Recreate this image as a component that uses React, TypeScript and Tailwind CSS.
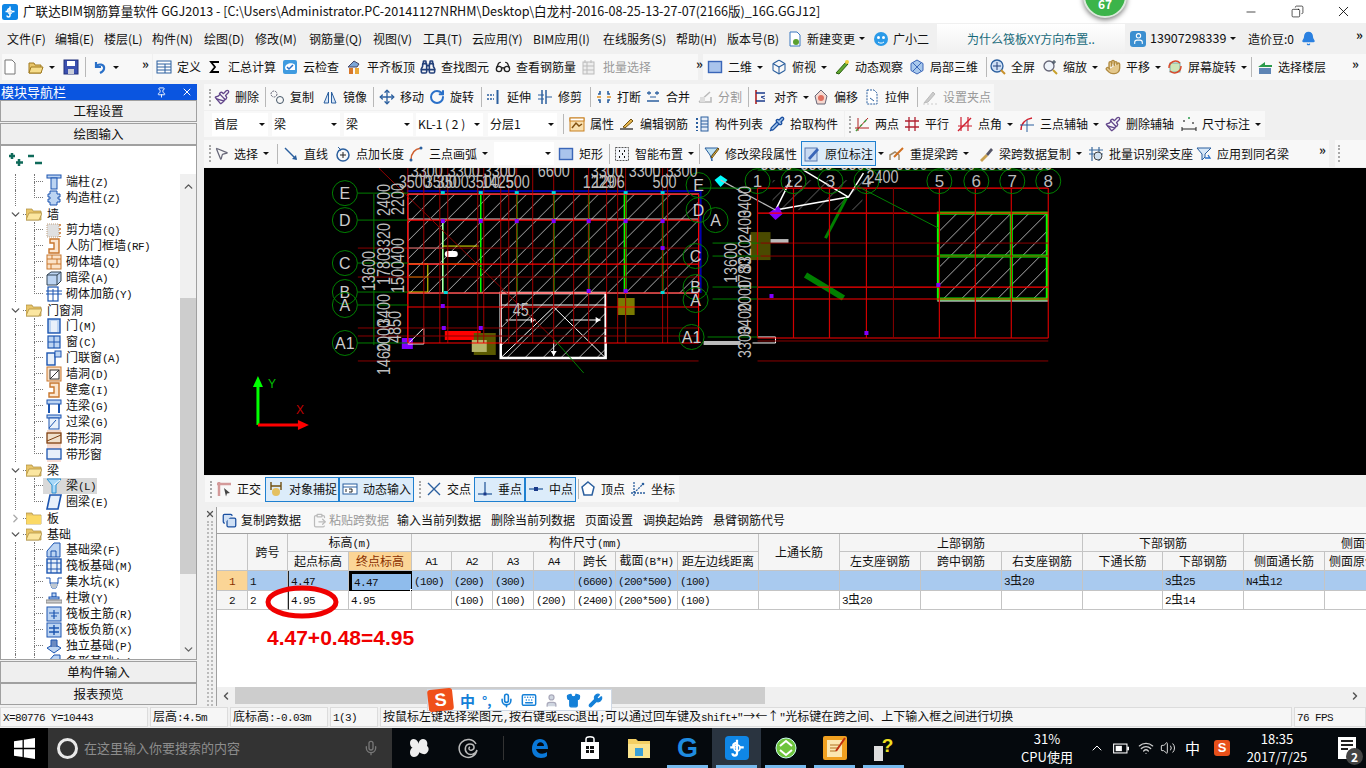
import type { ReactNode } from 'react';
import {
  Binoculars, Glasses, Hand, Paintbrush, Move, RotateCw, Box, Pipette, MousePointer2,
  Copy, ClipboardPaste, Mic, Keyboard, Shirt, Wrench, Volume2, Wifi, ChevronUp,
  ChevronDown, ChevronRight, ChevronLeft, Bell, User, X as XIcon, Minus, Pin,
} from 'lucide-react';

type Tool = { w: string; i?: string; l?: string; a?: boolean; d?: boolean; sel?: boolean };

const s = (children: ReactNode) => (
  <svg viewBox="0 0 16 16" width="16" height="16" fill="none" className="shrink-0">{children}</svg>
);

const icons: Record<string, ReactNode> = {
  doc: s(<path d="M3 1h7l3 3v11H3z" fill="#fff" stroke="#777" />),
  open: s(<><path d="M1 4h5l1 2h6v8H1z" fill="#e8c56a" stroke="#a07a20" /><path d="M3 8h12l-2 6H1z" fill="#f6dd8c" stroke="#a07a20" /></>),
  save: s(<><rect x="1" y="1" width="14" height="14" fill="#3b50b0" stroke="#22307a" /><rect x="4" y="2" width="8" height="5" fill="#fff" /><rect x="5" y="10" width="6" height="5" fill="#c9cdd8" /></>),
  undo: s(<path d="M4 3v5h5M4 8c2-4 9-3 8 2-.4 2-2 3-4 4" stroke="#2a70c8" strokeWidth="2.2" />),
  define: s(<><rect x="1" y="2" width="14" height="12" fill="#fff" stroke="#2b5f9e" /><path d="M1 5h14M1 8h14M1 11h14M9 5v9" stroke="#2b5f9e" /></>),
  sigma: s(<path d="M12 3H4l4 5-4 5h8" stroke="#000" strokeWidth="1.8" />),
  cloud: s(<><rect x="1" y="1" width="14" height="14" rx="2" fill="#3f9be0" /><path d="M3 9c0-5 8-6 10-3v5H4z" fill="#fff" /><path d="M5 8l2 2 4-4" stroke="#2a70c8" strokeWidth="1.5" /></>),
  level: s(<><path d="M2 8l6-6 5 3-2 3z" fill="#7ba6d8" stroke="#446" /><rect x="3" y="9" width="4" height="6" fill="#d8782a" /><rect x="9" y="9" width="4" height="6" fill="#e8a83a" /></>),
  find: <Binoculars size={16} color="#23407a" strokeWidth={2.4} />,
  glasses: <Glasses size={16} color="#222" strokeWidth={2} />,
  batch: s(<><rect x="1" y="3" width="11" height="12" fill="#eee" stroke="#bbb" /><path d="M1 7h11M1 11h11M5 3v12M3 1v3M9 1v3" stroke="#bbb" /></>),
  rect2d: s(<rect x="1.5" y="2.5" width="13" height="11" fill="#a9c4ec" stroke="#3a66b8" strokeWidth="1.4" />),
  cube: <Box size={16} color="#2b5f9e" strokeWidth={1.6} />,
  orbit: s(<><path d="M2 14L12 3l2 2L5 15z" fill="#62a830" stroke="#2a6010" /><circle cx="13" cy="3" r="2" fill="#f0d040" /></>),
  local3d: s(<><path d="M8 1l6 3.5v7L8 15l-6-3.5v-7z" fill="#a8c8ec" stroke="#3a66b8" /><path d="M4 4l8 8M12 4l-8 8" stroke="#3a66b8" /></>),
  full: s(<><circle cx="7" cy="7" r="6" fill="#cfe0f5" stroke="#2b5f9e" strokeWidth="1.3" /><path d="M7 3v8M3 7h8" stroke="#23407a" /><path d="M11 11l4 4" stroke="#c8902a" strokeWidth="2" /></>),
  zoom: s(<><circle cx="7" cy="7" r="5" fill="#eef3fa" stroke="#667" strokeWidth="1.3" /><path d="M11 11l4 4" stroke="#c8a02a" strokeWidth="2" /><path d="M12 1v4M10 3h4" stroke="#345" /></>),
  pan: <Hand size={16} color="#b08a40" fill="#e4c88c" />,
  spin: s(<><rect x="3" y="4" width="10" height="9" fill="#cfe6b8" stroke="#7aa" /><path d="M2 9a6.5 6.5 0 0 1 11-5M14 7a6.5 6.5 0 0 1-11 5" stroke="#d84a2a" strokeWidth="1.5" /></>),
  floors: s(<><path d="M1 8l7-5v3h7v2z" fill="#2a9a4a" /><path d="M2 10h12M2 12h12M2 14h12" stroke="#2b5f9e" strokeWidth="1.4" /></>),
  brush: <Paintbrush size={16} color="#64488c" />,
  copy: s(<><circle cx="5" cy="5" r="3" stroke="#667" strokeDasharray="2 1" /><circle cx="11" cy="11" r="3.5" stroke="#456" /></>),
  mirror: s(<><path d="M2 14L6.5 3v11zM14 14L9.5 3v11z" fill="#d8e6f8" stroke="#2b5f9e" /></>),
  move: <Move size={16} color="#2b5f9e" strokeWidth={2} />,
  rotate: <RotateCw size={16} color="#2a70c8" strokeWidth={3} />,
  extend: s(<><path d="M11.5 1v14" stroke="#2b5f9e" strokeWidth="2" /><path d="M1 6h7M1 10h7" stroke="#2b5f9e" strokeDasharray="2 1" strokeWidth="1.4" /></>),
  trim: s(<><path d="M5 1v14M9 1v14" stroke="#2b5f9e" strokeWidth="1.5" /><path d="M1 6h6M1 10h6M9 8h6" stroke="#2b5f9e" /></>),
  cut: s(<><path d="M4 2v3H2M12 2v3h2M4 14v-3H2M12 14v-3h2" stroke="#2b5f9e" strokeWidth="1.6" /><path d="M1 8h4M11 8h4" stroke="#e09020" strokeWidth="1.6" /></>),
  merge: s(<><path d="M2 4h4M10 4h4M2 12h12" stroke="#2b5f9e" strokeWidth="1.6" /><path d="M4 2v4M12 2v4M5 8h6" stroke="#2b5f9e" /></>),
  split: s(<><path d="M2 13L13 3M2 13h12V8" stroke="#bbb" strokeWidth="1.6" /><rect x="3" y="8" width="5" height="5" fill="#ddd" /></>),
  align: s(<><path d="M3 1v14" stroke="#b02020" strokeWidth="1.6" /><path d="M3 4h9M3 12h9" stroke="#1a3a8a" strokeWidth="1.6" /><path d="M12 7l-4 1 4 2" stroke="#1a3a8a" /></>),
  offset: s(<><path d="M8 1l6 6-2 8H4L2 7z" fill="#f5d8d0" stroke="#667" /><circle cx="8" cy="9" r="3" fill="#e07060" /></>),
  stretch: s(<><path d="M3 1h7l3 3v11H3z" fill="#fff" stroke="#2b5f9e" strokeDasharray="2 1" /><path d="M6 9l4 3" stroke="#2b5f9e" /></>),
  grip2: s(<><path d="M2 14L11 3l2 2-7 8z" fill="#ccc" stroke="#bbb" /><path d="M1 15h14" stroke="#ccc" strokeDasharray="2 2" /></>),
  attr: s(<><rect x="1" y="2" width="14" height="13" fill="#f8e0b0" stroke="#c88020" /><rect x="1" y="2" width="14" height="3" fill="#fff" stroke="#c88020" /><path d="M3 12l4-5 3 3 3-2" stroke="#805010" strokeWidth="1.5" /></>),
  edit: s(<><path d="M1 13h13" stroke="#444" strokeWidth="1.5" /><path d="M4 11L12 3l2 2-8 7z" fill="#e8b850" stroke="#705010" /></>),
  list: s(<><path d="M3 2v2M3 6v2M3 10v2M3 14v1" stroke="#2b5f9e" strokeWidth="2" /><rect x="7" y="1" width="7" height="14" fill="#e4ecf8" stroke="#2b5f9e" /><path d="M7 5h7M7 8h7M7 11h7" stroke="#2b5f9e" /></>),
  pick: <Pipette size={16} color="#1a4fa0" fill="#a8c8ec" />,
  two: s(<><path d="M1 12h14M4 2v13M2 15L14 2" stroke="#b02020" strokeWidth="1" /><path d="M2 15L14 2" stroke="#40a040" strokeDasharray="3 3" strokeWidth="1.4" /></>),
  parallel: s(<path d="M1 5h14M1 11h14M5 1v14M11 1v14" stroke="#b02030" strokeWidth="1.3" />),
  angle: s(<><path d="M1 10h14M4 1v14M11 1v14" stroke="#d02030" strokeWidth="1.2" /><path d="M1 15L14 2" stroke="#d02030" strokeWidth="1.4" /></>),
  arcaxis: s(<><path d="M2 14C2 7 7 3 13 2" stroke="#d02030" strokeWidth="1.5" /><path d="M1 9h14M8 4v12" stroke="#2b5f9e" /></>),
  dim: s(<><path d="M1 11v4M15 11v4M1 13h14" stroke="#222" /><circle cx="3" cy="5" r="1" fill="#555" /><circle cx="8" cy="2" r="1" fill="#2a9a4a" /><circle cx="12" cy="7" r="1" fill="#555" /></>),
  select: <MousePointer2 size={15} color="#667" />,
  line: s(<><path d="M2 2l11 11" stroke="#2b5f9e" strokeWidth="1.4" /><path d="M14 14l-5-1 4-4z" fill="#2b5f9e" /></>),
  addlen: s(<><circle cx="8" cy="9" r="6" stroke="#2b5f9e" strokeWidth="1.5" /><path d="M8 6v6M5 9h6" stroke="#222" /><path d="M3 1l3 3-3 1" stroke="#2b5f9e" /></>),
  arc: s(<><path d="M3 14C3 7 7 3 13 2" stroke="#d06030" strokeWidth="1.5" /><circle cx="3" cy="14" r="1.5" fill="#2b5f9e" /><circle cx="13" cy="2" r="1.5" fill="#2b5f9e" /></>),
  smart: s(<><rect x="1.5" y="1.5" width="13" height="13" fill="#f4f6fa" stroke="#555" strokeDasharray="2 1" /><path d="M5 5h1M10 5h1M8 8h1M5 11h1M10 11h1" stroke="#111" strokeWidth="2" /></>),
  seg: s(<><path d="M1 2h13L8 9v6L6 9z" fill="#bfe0f0" stroke="#2b5f9e" /><path d="M7 11l7-9 1 1-7 9z" fill="#e8c050" stroke="#705010" /></>),
  note: s(<><rect x="1" y="2" width="12" height="13" fill="#c8daf2" stroke="#5a7ab0" /><path d="M4 12L13 2l2 2-9 10z" fill="#3a66b8" /></>),
  lift: s(<><path d="M1 14V9l5-3 4 3v5" stroke="#a08a6a" strokeWidth="1.5" /><path d="M5 11L14 2" stroke="#d07020" strokeWidth="2" /></>),
  span: s(<><path d="M2 14l6-6 2 2-6 6z" fill="#c8a050" /><path d="M8 8l5-6 2 2-5 6z" fill="#556" /></>),
  scan: s(<><path d="M1 4h14M1 8h14M4 1v14M11 1v14" stroke="#3a6a9e" strokeWidth="1.2" /><circle cx="10" cy="10" r="4" fill="#cfe0f0" stroke="#444" /></>),
  same: s(<><path d="M1 2h14L9 8v3l-3 3V8z" fill="#d8e8f8" stroke="#2b5f9e" /><path d="M9 12h5l-2-3" stroke="#2a70c8" strokeWidth="1.3" /></>),
  ortho: s(<><path d="M3 1v14M1 3h14" stroke="#d49a9a" strokeWidth="2.5" /><path d="M8 7l6 5-3 .5-1 3z" fill="#444" /></>),
  snap: s(<><path d="M3 1v8M13 1v8M3 5h10" stroke="#705010" strokeWidth="1.4" /><circle cx="8" cy="11" r="4" fill="#e4c060" /></>),
  input: s(<><rect x="1" y="3" width="14" height="10" fill="#fff" stroke="#2b5f9e" /><path d="M1 6h14" stroke="#2b5f9e" /><path d="M4 8v3M7 8l3 0v3H7" stroke="#222" /></>),
  cross: s(<path d="M2 2l12 12M14 2L2 14" stroke="#2b5f9e" strokeWidth="1.4" />),
  perp: s(<><path d="M1 13h14" stroke="#2b5f9e" strokeWidth="1.3" /><path d="M8 1v12" stroke="#2b5f9e" strokeWidth="1.3" /><rect x="6.5" y="11.5" width="3" height="3" fill="#1a3a8a" /></>),
  mid: s(<><path d="M1 8h14" stroke="#2b5f9e" strokeWidth="1.3" /><rect x="6" y="6" width="4" height="4" fill="#1a3a8a" /></>),
  vertex: s(<path d="M8 1l6 5-2 8H4L2 6z" fill="#fff" stroke="#2b5f9e" strokeWidth="1.5" />),
  coord: s(<><path d="M4 1v14M1 12h14M4 12L13 3" stroke="#2b5f9e" strokeDasharray="2 1" strokeWidth="1.3" /><circle cx="13" cy="3" r="1.3" fill="#2b5f9e" /></>),
  copysm: <Copy size={15} color="#1a4fa0" fill="#cfe0f5" />,
  pastesm: <ClipboardPaste size={15} color="#bbb" />,
};

const Arrow = () => (
  <span className="inline-block shrink-0 border-x-[3px] border-t-[3px] border-x-transparent border-t-[#111]" />
);
const Grip = ({ w }: { w: string }) => (
  <span className={`flex h-full shrink-0 items-center justify-center ${w}`}>
    <span className="h-[17px] border-l-2 border-dotted border-[#a8a8a8]" />
  </span>
);
const Sep = ({ w }: { w: string }) => (
  <span className={`flex h-full shrink-0 items-center justify-center ${w}`}>
    <span className="h-[20px] border-l border-[#b8b8b8]" />
  </span>
);
const More = ({ w }: { w: string }) => (
  <span className={`shrink-0 text-[13px] leading-none font-bold text-[#222] mb-[8px] text-right ${w}`}>»</span>
);

const ToolItem = ({ t }: { t: Tool }) => {
  if (!t.i && !t.l && !t.a) return <Sep w={t.w} />;
  return (
    <span
      className={`flex shrink-0 items-center gap-[5px] whitespace-nowrap ${t.w} ${t.d ? 'text-[#9a9a9a]' : 'text-[#111]'} ${
        t.sel ? 'h-[25px] border border-[#1f80d0] bg-[#dcecfa] pl-[2px]' : ''
      }`}
    >
      {t.i && icons[t.i]}
      {t.l && <span>{t.l}</span>}
      {t.a && <Arrow />}
    </span>
  );
};

const Combo = ({ w, t }: { w: string; t: string }) => (
  <span className={`flex h-[23px] shrink-0 items-center justify-between bg-white pl-[2px] pr-[3px] ${w}`}>
    <span className="whitespace-nowrap">{t}</span>
    <Arrow />
  </span>
);

const Tools = ({ items }: { items: Tool[] }) => (
  <>
    {items.map((t, i) => (
      <ToolItem key={i} t={t} />
    ))}
  </>
);

const row1a: Tool[] = [
  { w: 'w-[26px]', i: 'doc' }, { w: 'w-[35px]', i: 'open', a: true }, { w: 'w-[16px]', i: 'save' }, { w: 'w-[13px]' },
  { w: 'w-[38px]', i: 'undo', a: true },
];
const row1b: Tool[] = [
  { w: 'w-[51px]', i: 'define', l: '定义' }, { w: 'w-[75px]', i: 'sigma', l: '汇总计算' }, { w: 'w-[64px]', i: 'cloud', l: '云检查' },
  { w: 'w-[74px]', i: 'level', l: '平齐板顶' }, { w: 'w-[75px]', i: 'find', l: '查找图元' }, { w: 'w-[87px]', i: 'glasses', l: '查看钢筋量' },
  { w: 'w-[85px]', i: 'batch', l: '批量选择', d: true },
];
const row1c: Tool[] = [
  { w: 'w-[64px]', i: 'rect2d', l: '二维', a: true }, { w: 'w-[63px]', i: 'cube', l: '俯视', a: true }, { w: 'w-[75px]', i: 'orbit', l: '动态观察' },
  { w: 'w-[73px]', i: 'local3d', l: '局部三维' }, { w: 'w-[8px]' }, { w: 'w-[52px]', i: 'full', l: '全屏' }, { w: 'w-[63px]', i: 'zoom', l: '缩放', a: true },
  { w: 'w-[62px]', i: 'pan', l: '平移', a: true }, { w: 'w-[79px]', i: 'spin', l: '屏幕旋转', a: true }, { w: 'w-[11px]' },
  { w: 'w-[75px]', i: 'floors', l: '选择楼层' },
];
const row2: Tool[] = [
  { w: 'w-[47px]', i: 'brush', l: '删除' }, { w: 'w-[8px]' }, { w: 'w-[53px]', i: 'copy', l: '复制' }, { w: 'w-[46px]', i: 'mirror', l: '镜像' }, { w: 'w-[11px]' },
  { w: 'w-[50px]', i: 'move', l: '移动' }, { w: 'w-[48px]', i: 'rotate', l: '旋转' }, { w: 'w-[9px]' }, { w: 'w-[51px]', i: 'extend', l: '延伸' },
  { w: 'w-[48px]', i: 'trim', l: '修剪' }, { w: 'w-[11px]' }, { w: 'w-[49px]', i: 'cut', l: '打断' }, { w: 'w-[52px]', i: 'merge', l: '合并' },
  { w: 'w-[47px]', i: 'split', l: '分割', d: true }, { w: 'w-[9px]' }, { w: 'w-[60px]', i: 'align', l: '对齐', a: true }, { w: 'w-[51px]', i: 'offset', l: '偏移' },
  { w: 'w-[48px]', i: 'stretch', l: '拉伸' }, { w: 'w-[10px]' }, { w: 'w-[72px]', i: 'grip2', l: '设置夹点', d: true },
];
const row3a: Tool[] = [
  { w: 'w-[12px]' }, { w: 'w-[50px]', i: 'attr', l: '属性' }, { w: 'w-[75px]', i: 'edit', l: '编辑钢筋' }, { w: 'w-[75px]', i: 'list', l: '构件列表' }, { w: 'w-[75px]', i: 'pick', l: '拾取构件' },
];
const row3b: Tool[] = [
  { w: 'w-[50px]', i: 'two', l: '两点' }, { w: 'w-[53px]', i: 'parallel', l: '平行' }, { w: 'w-[62px]', i: 'angle', l: '点角', a: true },
  { w: 'w-[86px]', i: 'arcaxis', l: '三点辅轴', a: true }, { w: 'w-[76px]', i: 'brush', l: '删除辅轴' }, { w: 'w-[84px]', i: 'dim', l: '尺寸标注', a: true },
];
const row4a: Tool[] = [
  { w: 'w-[58px]', i: 'select', l: '选择', a: true }, { w: 'w-[11px]' }, { w: 'w-[52px]', i: 'line', l: '直线' }, { w: 'w-[73px]', i: 'addlen', l: '点加长度' },
  { w: 'w-[86px]', i: 'arc', l: '三点画弧', a: true },
];
const row4b: Tool[] = [
  { w: 'w-[46px]', i: 'rect2d', l: '矩形' }, { w: 'w-[10px]' }, { w: 'w-[80px]', i: 'smart', l: '智能布置', a: true }, { w: 'w-[10px]' },
  { w: 'w-[97px]', i: 'seg', l: '修改梁段属性' }, { w: 'w-[75px]', i: 'note', l: '原位标注', sel: true }, { w: 'w-[13px] pl-[2px]', a: true },
  { w: 'w-[89px]', i: 'lift', l: '重提梁跨', a: true }, { w: 'w-[110px]', i: 'span', l: '梁跨数据复制', a: true }, { w: 'w-[108px]', i: 'scan', l: '批量识别梁支座' },
  { w: 'w-[98px]', i: 'same', l: '应用到同名梁' },
];
const snapA: Tool[] = [
  { w: 'w-[49px]', i: 'ortho', l: '正交' }, { w: 'w-[74px]', i: 'snap', l: '对象捕捉', sel: true }, { w: 'w-[75px]', i: 'input', l: '动态输入', sel: true },
];
const snapB: Tool[] = [
  { w: 'w-[48px]', i: 'cross', l: '交点' }, { w: 'w-[51px]', i: 'perp', l: '垂点', sel: true }, { w: 'w-[51px]', i: 'mid', l: '中点', sel: true },
  { w: 'w-[4px]' }, { w: 'w-[50px]', i: 'vertex', l: '顶点' }, { w: 'w-[48px]', i: 'coord', l: '坐标' },
];

// splits latin runs off so they get the half width bitmap-like look of the original font
const Sim = ({ t }: { t: string }) => (
  <span className="whitespace-pre">
    {t.split(/([\x20-\x7e]+)/).map((p, i) =>
      /[\x20-\x7e]/.test(p) ? (
        <span key={i} className="font-['Liberation_Mono',monospace] text-[11px] tracking-[-0.6px]">{p}</span>
      ) : (
        p
      ),
    )}
  </span>
);

const ti = (children: ReactNode) => (
  <svg viewBox="0 0 16 16" width="16" height="16" fill="none" className="shrink-0">{children}</svg>
);
const B = '#1c55b0';
const L = '#bcd4f2';
const O = '#c8762c';
const treeIcons: Record<string, ReactNode> = {
  tcol: ti(<><rect x="1" y="1" width="14" height="3" fill={L} stroke={B} /><rect x="5" y="4" width="6" height="11" fill={L} stroke={B} /></>),
  gz: ti(<><path d="M4 1h7v3h3v3h-2v2h2v3h-3v3H4v-3H2V9h2V7H2V4h2z" fill={L} stroke={B} /></>),
  shear: ti(<><rect x="1" y="2" width="12" height="13" fill="#e0e0e0" stroke="#c0a080" strokeDasharray="1 1" /><path d="M14 2v13" stroke={O} strokeDasharray="2 2" strokeWidth="1.5" /></>),
  bracket: ti(<path d="M4 1h9v14H3v-4h5V5H4z" fill="#fbe6d0" stroke={O} strokeWidth="1.4" />),
  brick: ti(<><rect x="1" y="1" width="14" height="14" fill="#fbe2c8" stroke={O} /><path d="M1 5h14M1 10h14M6 1v4M11 5v5M5 10v5" stroke={O} /></>),
  dark: ti(<><path d="M1 5l4-3h10v9l-4 4H1z" fill={L} stroke="#345" /><path d="M1 5h10v10M11 5l4-3" stroke="#345" /></>),
  rein: ti(<><rect x="2" y="1" width="10" height="14" stroke={B} strokeWidth="1.2" /><path d="M0 5h16M0 8h16M7 3v12" stroke={B} /></>),
  door: ti(<><rect x="2" y="1" width="12" height="14" fill={L} stroke={B} strokeWidth="1.4" /><rect x="5" y="3" width="6" height="11" fill="#e8f0fa" /></>),
  win: ti(<><rect x="2" y="2" width="12" height="12" fill={L} stroke={B} strokeWidth="1.2" /><path d="M8 2v12M2 8h12" stroke={B} /></>),
  doorwin: ti(<><rect x="1" y="3" width="8" height="12" fill="#e8f0fa" stroke={B} strokeWidth="1.4" /><rect x="9" y="1" width="6" height="6" fill={L} stroke={B} /></>),
  hole: ti(<><rect x="1" y="1" width="14" height="14" fill="#fbe2c8" stroke={O} /><rect x="4" y="4" width="9" height="9" fill="#fff" stroke="#333" /><path d="M4 13l9-9" stroke="#333" /></>),
  lian: ti(<><rect x="1" y="2" width="14" height="4" fill={L} stroke={B} /><path d="M3 6v9M13 6v9" stroke={B} strokeWidth="2" /></>),
  guo: ti(<><rect x="1" y="1" width="14" height="3" fill={L} stroke={B} /><rect x="3" y="4" width="10" height="11" fill="#e8f0fa" stroke={B} /><path d="M3 14l7-8" stroke={B} /></>),
  bandH: ti(<><rect x="1" y="0" width="14" height="16" fill="#f4d8c8" /><rect x="1" y="3" width="14" height="10" fill="#f0e0cc" stroke="#804010" strokeWidth="1.3" /><path d="M1 11L15 5" stroke="#804010" /></>),
  bandW: ti(<><rect x="1" y="0" width="14" height="16" fill="#f8dcd4" /><rect x="1" y="3" width="14" height="10" fill="#e8f0fa" stroke={B} strokeWidth="1.3" /></>),
  beam: ti(<><path d="M1 1h14l-5 6v8H6V7z" fill="#a8d8f8" stroke="#2a90d0" /><path d="M8 7l6-5" stroke="#fff" /></>),
  ring: ti(<path d="M4 1h11l-3 14H1z" fill="#e8f0fa" stroke={B} strokeWidth="1.6" />),
  fbeam: ti(<><path d="M1 15V9l7-8h6v14z" fill={L} stroke={B} /><path d="M5 15V9h5v6" stroke={B} /></>),
  raft: ti(<><rect x="1" y="1" width="14" height="14" fill="#e8f0fa" stroke={B} strokeWidth="1.4" /><path d="M1 5h14M1 11h14M5 1v14M11 1v14" stroke={B} /></>),
  pit: ti(<><path d="M0 4h4v5h8V4h4M4 9l2 5h4l2-5" stroke={B} /><path d="M4 10h8l-2 4H6z" fill="#c0c8d0" /></>),
  pier: ti(<><rect x="6" y="3" width="4" height="4" fill={L} stroke={B} /><rect x="3" y="7" width="10" height="2" fill={L} stroke={B} /><rect x="0" y="10" width="16" height="3" fill="#ccc" stroke="#888" /></>),
  main: ti(<><rect x="1" y="1" width="14" height="14" fill={L} stroke={B} /><path d="M3 7h10M8 4v9M5 10h6" stroke={B} strokeWidth="1.2" /></>),
  neg: ti(<><rect x="1" y="1" width="14" height="14" fill={L} stroke={B} /><path d="M3 6h10M3 10h10M8 3v10" stroke={B} strokeWidth="1.4" /></>),
  iso: ti(<><path d="M1 10l7-4 7 4-7 5z" fill={L} stroke={B} /><path d="M5 9V2h6v7" fill="#6a8ac0" stroke={B} /></>),
};

type Node = { k?: string; l: string; last?: boolean; open?: boolean; folder?: boolean; sel?: boolean };
const tree: Node[] = [
  { k: 'tcol', l: '端柱(Z)' }, { k: 'gz', l: '构造柱(Z)', last: true },
  { folder: true, open: true, l: '墙' },
  { k: 'shear', l: '剪力墙(Q)' }, { k: 'bracket', l: '人防门框墙(RF)' }, { k: 'brick', l: '砌体墙(Q)' }, { k: 'dark', l: '暗梁(A)' }, { k: 'rein', l: '砌体加筋(Y)', last: true },
  { folder: true, open: true, l: '门窗洞' },
  { k: 'door', l: '门(M)' }, { k: 'win', l: '窗(C)' }, { k: 'doorwin', l: '门联窗(A)' }, { k: 'hole', l: '墙洞(D)' }, { k: 'bracket', l: '壁龛(I)' },
  { k: 'lian', l: '连梁(G)' }, { k: 'guo', l: '过梁(G)' }, { k: 'bandH', l: '带形洞' }, { k: 'bandW', l: '带形窗', last: true },
  { folder: true, open: true, l: '梁' },
  { k: 'beam', l: '梁(L)', sel: true }, { k: 'ring', l: '圈梁(E)', last: true },
  { folder: true, l: '板' },
  { folder: true, open: true, l: '基础' },
  { k: 'fbeam', l: '基础梁(F)' }, { k: 'raft', l: '筏板基础(M)' }, { k: 'pit', l: '集水坑(K)' }, { k: 'pier', l: '柱墩(Y)' }, { k: 'main', l: '筏板主筋(R)' },
  { k: 'neg', l: '筏板负筋(X)' }, { k: 'iso', l: '独立基础(P)' }, { k: 'fbeam', l: '条形基础(T)' },
];

const Folder = ({ open }: { open?: boolean }) => (
  <svg viewBox="0 0 16 14" width="16" height="14" className="shrink-0">
    <path d="M0 2h6l1 2h8v9H0z" fill="#e8c56a" stroke="#a98a3a" strokeWidth=".7" />
    {open ? <path d="M3 6h13l-3 7H0z" fill="#fbe6a0" stroke="#a98a3a" strokeWidth=".7" /> : <rect x="0.5" y="4.5" width="14.5" height="8.5" fill="#fbd965" />}
  </svg>
);

const TreeRow = ({ n }: { n: Node }) =>
  n.folder ? (
    <div className="flex h-[16px] items-center">
      <span className="flex w-[21px] shrink-0 justify-end pr-[1px]">
        {n.open ? <ChevronDown size={13} color="#555" strokeWidth={2.5} /> : <ChevronRight size={13} color="#aaa" strokeWidth={2.5} />}
      </span>
      <span className="w-[3px] shrink-0 border-b border-dotted border-[#777]" />
      <Folder open={n.open} />
      <span className="ml-[5px]">{n.l}</span>
    </div>
  ) : (
    <div className="flex h-[16px] items-stretch">
      <span className="ml-[13px] w-[19px] shrink-0 border-l border-dotted border-[#777]" />
      <span className="w-[9px] shrink-0">
        <span className="block h-1/2 border-l border-b border-dotted border-[#777]" />
        {!n.last && <span className="block h-1/2 border-l border-dotted border-[#777]" />}
      </span>
      <span className={`flex items-center pl-[3px] pr-[1px] ${n.sel ? 'bg-[#d9d9d9]' : ''}`}>
        {treeIcons[n.k!]}
        <span className="ml-[4px]"><Sim t={n.l} /></span>
      </span>
    </div>
  );

const NavBtn = ({ t, cls }: { t: string; cls: string }) => (
  <div className={`flex h-[22px] items-center justify-center border border-[#a0a0a0] bg-[#efefef] text-[12.500px] ${cls}`}>{t}</div>
);

const hl = [194, 220, 264, 293, 307, 343];
const hd = [248, 277, 328, 336, 361];
const vl = [407, 423, 439, 447, 477, 483, 500, 508, 516, 532, 553, 573, 588, 606, 617, 625, 662, 667];
const rh = [188, 213, 287, 299, 338];
const rd = [243, 256, 341, 361];
const rv = [757, 793, 829, 866, 939, 975, 1011, 1048];
const purple: [number, number][] = [[442, 221], [480, 221], [516, 221], [553, 221], [588, 221], [625, 221], [662, 221], [662, 248], [442, 306], [588, 291], [625, 291], [443, 328], [480, 328], [771, 296], [866, 333], [938, 285]];
const cyan: [number, number][] = [[442, 192], [480, 192], [516, 192], [553, 192], [625, 192], [662, 192], [445, 292], [662, 292]];
const lCircles: [number, number, string][] = [[344, 193, 'E'], [344, 220, 'D'], [344, 263, 'C'], [344, 292, 'B'], [344, 305, 'A'], [344, 343, 'A1'], [698, 185, 'E'], [698, 210, 'D'], [695, 256, 'C'], [695, 287, 'B'], [695, 300, 'A'], [691, 337, 'A1'], [715, 220, 'A']];
const tCircles: [number, string][] = [[757, '1'], [793, '12'], [830, '3'], [866, '4'], [939, '5'], [976, '6'], [1012, '7'], [1048, '8']];
const dims: [number, number, string, number?][] = [
  [410, 177, '3300'], [447, 177, '3300'], [483, 177, '3300'], [537, 177, '6600'], [590, 177, '3300'], [628, 177, '3300'], [665, 177, '3300'],
  [398, 188, '3500'], [424, 188, '3500'], [436, 188, '3500'], [467, 188, '3500'], [481, 188, '1425'], [505, 188, '500'], [582, 188, '1229'], [592, 188, '1206'], [652, 188, '500'],
  [760, 170, '3300'], [800, 170, '3300'], [840, 170, '3300'], [895, 170, '6600'], [943, 170, '3300'], [980, 170, '3300'], [1020, 170, '3300'],
  [866, 183, '2400'],
  [374, 291, '13600', -90], [389, 216, '2400', -90], [389, 255, '3320', -90], [389, 285, '1780', -90], [389, 326, '3400', -90], [389, 352, '2000', -90], [389, 375, '1460', -90],
  [403, 215, '2200', -90], [403, 262, '400', -90], [403, 293, '1500', -90], [400, 343, '4850', -90],
  [736, 283, '13600', -90], [750, 218, '3400', -90], [750, 242, '2400', -90], [750, 272, '3320', -90], [750, 290, '1780', -90], [750, 312, '2000', -90], [750, 335, '3400', -90], [750, 358, '3300', -90],
  [512, 316, '45'],
];

const Canvas = () => (
  <svg viewBox="203 168 1163 307" className="block h-[307px] w-full bg-black" fontFamily="'Liberation Sans', sans-serif">
    <defs>
      <pattern id="h" width="18" height="18" patternUnits="userSpaceOnUse">
        <path d="M0 18L18 0" stroke="#ddd" strokeWidth=".8" />
      </pattern>
    </defs>
    {/* left building */}
    <rect x="407" y="194" width="291" height="99" fill="url(#h)" />
    <rect x="500" y="293" width="105" height="65" fill="url(#h)" />
    <rect x="772" y="180" width="90" height="30" fill="url(#h)" opacity=".6" />
    <rect x="937" y="212" width="111" height="88" fill="url(#h)" />
    <rect x="406" y="190" width="295" height="2" fill="#0000b0" />
    <rect x="699" y="190" width="2" height="103" fill="#0000b0" />
    <path d="M442 219V293M480 194V293M516 194V293M553 194V293M588 194V293M662 194V293" stroke="#00ff00" strokeWidth="1.5" />
    <rect x="623" y="194" width="3" height="99" fill="#00ff00" />
    <path d="M625 293V343" stroke="#00c000" />
    <rect x="407" y="194" width="291" height="99" stroke="#fff" fill="none" />
    <path d="M407 219H698M407 248H442M407 264H442M442 219V293" stroke="#fff" />
    <path d="M442 246H478M442 264H478M407 264H427V292H407M407 277H427" stroke="#e8e800" fill="none" />
    <rect x="444" y="251" width="13" height="6" rx="3" fill="#fff" />
    <rect x="500" y="293" width="105" height="65" stroke="#fff" strokeWidth="2.5" fill="none" />
    <path d="M500 305H605M553 307L500 358M553 307L605 358M505 320H535M570 320H600M553 340V356" stroke="#fff" />
    <path d="M535 320l-5-3v6zM600 320l-5-3v6zM553 356l-3-5h6z" fill="#fff" />
    <rect x="444" y="331" width="36" height="9" fill="#ff0000" />
    <rect x="473" y="333" width="22" height="22" fill="#5a5a00" />
    <rect x="471" y="340" width="15" height="12" fill="#b5b56a" />
    <rect x="617" y="298" width="17" height="17" fill="#7a7a00" />
    <rect x="401" y="338" width="11" height="11" fill="#8000ff" />
    <path d="M407 344L423 328V344Z" stroke="#fff" fill="none" />
    {/* right building */}
    <path d="M775 210L848 197L863 173M803 170L848 197M775 210L790 180" stroke="#fff" strokeWidth="1.5" fill="none" />
    <path d="M768 213L778 206L782 214L775 220Z" fill="#8000ff" />
    <path d="M720 175L727 180L720 187L714 180Z" fill="#00ffff" />
    <path d="M720 180L775 210" stroke="#bbb" strokeWidth="1.2" />
    <path d="M846 198L825 238" stroke="#008000" strokeWidth="3" />
    <path d="M805 275L843 298" stroke="#008000" strokeWidth="6" />
    <rect x="750" y="232" width="20" height="28" fill="#4a4a00" />
    <rect x="770" y="239" width="18" height="4" fill="#bbb" />
    <rect x="703" y="341" width="37" height="4" fill="#bbb" />
    <path d="M752 343H775V337H757" stroke="#fff" fill="none" />
    <rect x="938" y="213" width="109" height="86" fill="none" stroke="#00ff00" strokeWidth="3" />
    <path d="M1011 213V299M938 256H1047" stroke="#00ff00" strokeWidth="3" />
    <path d="M937 301H1048" stroke="#fff" />
    {/* grid */}
    {hd.map((y) => <path key={y} d={`M357 ${y}H698`} stroke="#8b0000" />)}
    {vl.map((x) => <path key={x} d={`M${x} 168V343`} stroke="#a00000" />)}
    {hl.map((y) => <path key={y} d={`M407 ${y}H698`} stroke="#ff0000" strokeWidth="1.2" />)}
    <path d="M407 194V343M698 194V343" stroke="#ff0000" strokeWidth="1.2" />
    {rd.map((y) => <path key={y} d={`M757 ${y}H1048`} stroke="#8b0000" />)}
    {rh.map((y) => <path key={y} d={`M757 ${y}H1048`} stroke="#ff0000" strokeWidth="1.2" />)}
    {rv.map((x) => <path key={x} d={`M${x} 188V338`} stroke="#d00000" strokeWidth="1.2" />)}
    <path d="M893 188V338" stroke="#8b0000" />
    <path d="M378 168L554 340" stroke="#900000" />
    <path d="M554 340L583 373M855 185L938 228" stroke="#008000" />
    {purple.map(([x, y]) => <rect key={`${x}-${y}`} x={x - 2} y={y - 2} width="4" height="4" fill="#8000ff" />)}
    {cyan.map(([x, y]) => <rect key={`${x}-${y}`} x={x - 2} y={y - 1} width="4" height="3" fill="#00d8d8" />)}
    {/* green dims */}
    <path d="M373 194V345M357 193H407M357 220H407M357 263H407M357 292H407M357 305H407M357 343H407M698 188H757M712 243H760M712 256H760M712 287H757M712 299H757M707 337H757M757 170H1048" stroke="#008000" />
    {lCircles.map(([x, y, t], i) => (
      <g key={i}>
        <circle cx={x} cy={y} r="12.5" stroke="#008000" fill="none" />
        <text x={x} y={y + 6} textAnchor="middle" fontSize="16" fill="#ccc">{t}</text>
      </g>
    ))}
    {tCircles.map(([x, t]) => (
      <g key={x}>
        <circle cx={x} cy="181" r="12.5" stroke="#008000" fill="none" />
        <text x={x} y="187" textAnchor="middle" fontSize="17" fill="#bbb">{t}</text>
      </g>
    ))}
    <g fill="#bdbdbd" fontSize="18">
      {dims.map(([x, y, t, r], i) => (
        <text key={i} transform={`translate(${x} ${y}) rotate(${r ?? 0}) scale(.8 1)`}>{t}</text>
      ))}
    </g>
    {/* axis */}
    <path d="M257 425V385" stroke="#00ff00" strokeWidth="3" />
    <path d="M257 376l-5 11h10z" fill="#00ff00" />
    <path d="M257 425H298" stroke="#ff0000" strokeWidth="3" />
    <path d="M308 425l-11-5v10z" fill="#ff0000" />
    <text x="267" y="388" fontSize="12" fill="#00c000">Y</text>
    <text x="295" y="414" fontSize="12" fill="#c00000">X</text>
  </svg>
);

const tc = 'flex items-center border-r border-b border-[#c4c4c4] overflow-hidden whitespace-nowrap';
const hc = `${tc} justify-center bg-[#f5f5f5]`;
const row1Cells = ['', '1', '4.47', '4.47', '(100)', '(200)', '(300)', '', '(6600)', '(200*500)', '(100)', '', '', '', '3虫20', '', '3虫25', 'N4虫12', '', ''];
const row2Cells = ['', '2', '4.95', '4.95', '', '(100)', '(100)', '(200)', '(2400)', '(200*500)', '(100)', '', '3虫20', '', '', '', '2虫14', '', '', ''];
const sub = ['A1', 'A2', 'A3', 'A4', '跨长', '截面(B*H)', '距左边线距离'];
const sub2 = ['左支座钢筋', '跨中钢筋', '右支座钢筋', '下通长筋', '下部钢筋', '侧面通长筋', '侧面原位钢筋', '拉筋'];

const BodyRow = ({ cells, n, on }: { cells: string[]; n: string; on?: boolean }) => (
  <>
    <div className={`${tc} justify-center ${on ? 'bg-[#fbd596] text-[#8a3000]' : 'bg-[#f5f5f5]'}`}><Sim t={n} /></div>
    {cells.slice(1).map((c, i) => {
      const sel = on && i === 2;
      return (
        <div
          key={i}
          className={`${tc} relative pl-[2px] ${on ? 'bg-[#a9caef]' : 'bg-white'} ${i === 1 ? 'border-l border-l-[#222]' : ''} ${
            sel ? 'border-[3px] border-black !bg-[#8fbcec] !overflow-visible' : ''
          }`}
        >
          <Sim t={c} />
          {sel && <span className="absolute -right-[4px] -bottom-[4px] h-[5px] w-[5px] border border-white bg-black" />}
        </div>
      );
    })}
  </>
);

const Status = ({ w, t }: { w: string; t: string }) => (
  <div className={`flex h-[20px] shrink-0 items-center overflow-hidden whitespace-nowrap border border-[#dcdcdc] bg-[#f6f6f6] pl-[2px] ${w}`}>
    <Sim t={t} />
  </div>
);

const AppLogo = ({ size }: { size: number }) => (
  <svg viewBox="0 0 16 16" width={size} height={size} className="shrink-0">
    <rect width="16" height="16" rx="2.5" fill="#0f86e6" />
    <path d="M8 2.5v9c0 2-3 2-3 0M3.5 7.5h2.500c-1.500-2 1-3 2-3M12.500 7.500h-2.500" stroke="#fff" strokeWidth="1.500" fill="none" />
    <circle cx="8" cy="8" r="2" stroke="#fff" fill="none" />
  </svg>
);

const TaskCell = ({ on, active, children }: { on?: boolean; active?: boolean; children: ReactNode }) => (
  <div className={`relative flex h-full w-[49px] shrink-0 items-center justify-center ${active ? 'bg-[#2a3440]' : ''}`}>
    {children}
    {on && <span className="absolute bottom-0 left-[4px] h-[3px] w-[41px] bg-[#76b9ed]" />}
  </div>
);

const Band = ({ cls, children }: { cls: string; children: ReactNode }) => (
  <div className={`flex h-full shrink-0 items-center bg-[#f8f8f8] ${cls}`}>{children}</div>
);

export default function App() {
  return (
    <div className="relative flex h-[768px] w-[1366px] flex-col overflow-hidden bg-[#f0f0f0] font-['Noto_Sans_CJK_SC',sans-serif] text-[12px] text-[#111]">
      {/* title bar */}
      <div className="flex h-[23px] shrink-0 items-center bg-white pl-[2px] text-[12.580px]">
        <AppLogo size={16} />
        <span className="ml-[5px] whitespace-nowrap">广联达BIM钢筋算量软件 GGJ2013 - [C:\Users\Administrator.PC-20141127NRHM\Desktop\白龙村-2016-08-25-13-27-07(2166版)_16G.GGJ12]</span>
        <div className="ml-auto flex items-center text-black">
          <span className="flex w-[46px] justify-center"><Minus size={14} strokeWidth={1.2} /></span>
          <span className="flex w-[46px] justify-center"><Copy size={13} strokeWidth={1.2} className="-scale-x-100" /></span>
          <span className="flex w-[46px] justify-center"><XIcon size={17} strokeWidth={1.2} /></span>
        </div>
      </div>
      {/* menu bar */}
      <div className="flex h-[31px] shrink-0 items-center whitespace-nowrap pl-[7px]">
        {[['文件(F)', 'w-[48px]'], ['编辑(E)', 'w-[49px]'], ['楼层(L)', 'w-[48px]'], ['构件(N)', 'w-[52px]'], ['绘图(D)', 'w-[51px]'], ['修改(M)', 'w-[54px]'], ['钢筋量(Q)', 'w-[64px]'], ['视图(V)', 'w-[50px]'], ['工具(T)', 'w-[49px]'], ['云应用(Y)', 'w-[61px]'], ['BIM应用(I)', 'w-[70px]'], ['在线服务(S)', 'w-[73px]'], ['帮助(H)', 'w-[51px]'], ['版本号(B)', 'w-[60px]']].map(([t, w]) => (
          <span key={t} className={`shrink-0 ${w}`}>{t}</span>
        ))}
        <span className="flex w-[86px] shrink-0 items-center gap-[4px]">
          <svg viewBox="0 0 16 16" width="16" height="16"><path d="M3 1h7l3 3v11H3z" fill="#fff" stroke="#3a78c0" /><circle cx="9" cy="11" r="3" fill="#5aa030" /></svg>
          新建变更 <Arrow />
        </span>
        <span className="flex w-[64px] shrink-0 items-center gap-[4px]">
          <svg viewBox="0 0 16 16" width="16" height="16"><circle cx="8" cy="8" r="7" fill="#2a9ae8" /><circle cx="5.500" cy="6.500" r="1.500" fill="#fff" /><circle cx="10.500" cy="6.500" r="1.500" fill="#fff" /><path d="M5 11c2 1.500 4 1.500 6 0" stroke="#fff" fill="none" /></svg>
          广小二
        </span>
        <span className="flex h-[30px] w-[188px] shrink-0 items-center justify-center bg-gradient-to-b from-white to-[#f0f0f0] text-[#176a7a]">为什么筏板XY方向布置..</span>
        <span className="ml-[5px] flex w-[118px] shrink-0 items-center gap-[4px] text-[12.500px]">
          <span className="flex h-[16px] w-[16px] items-center justify-center rounded-[3px] bg-[#3c8fd0]"><User size={13} color="#fff" /></span>
          13907298339 <Arrow />
        </span>
        <span className="shrink-0">造价豆:0</span>
        <Bell size={15} color="#2a80e0" fill="#2a80e0" className="ml-[7px] shrink-0" />
        <span className="ml-auto mb-[8px] pr-[3px] text-[13px] leading-none font-bold">»</span>
      </div>
      {/* standard toolbar */}
      <div className="flex h-[26px] shrink-0 items-center">
        <Band cls="ml-[2px] w-[150px]">
          <Tools items={row1a} />
          <More w="w-[19px]" />
        </Band>
        <Band cls="ml-[1px] w-[545px] pl-[3px]">
          <Tools items={row1b} />
          <More w="w-[36px]" />
        </Band>
        <Band cls="ml-[5px] w-[663px] pl-[4px]">
          <Tools items={row1c} />
          <More w="w-[27px]" />
        </Band>
      </div>
      <div className="flex min-h-0 flex-1 pt-[4px]">
        {/* left nav */}
        <div className="flex w-[197px] shrink-0 flex-col pb-[1px]">
          <div className="flex h-[16px] shrink-0 items-center bg-[#0a55e0] pl-[1px] text-[13px] text-white">
            模块导航栏
            <Pin size={11} className="ml-auto mr-[10px]" />
            <XIcon size={12} className="mr-[4px] ml-[4px]" />
          </div>
          <NavBtn t="工程设置" cls="shrink-0" />
          <NavBtn t="绘图输入" cls="mt-[1px] shrink-0" />
          <div className="flex h-[29px] shrink-0 items-center gap-[2px] border-x border-t border-[#a0a0a0] bg-white pl-[6px]">
            <svg viewBox="0 0 18 16" width="18" height="16"><path d="M5 1v6M2 4h6M12 7v7M9 10.500h7" stroke="#0f6a5a" strokeWidth="2.500" /></svg>
            <svg viewBox="0 0 16 16" width="16" height="16"><path d="M1 4h6M8 11h7" stroke="#0f6a5a" strokeWidth="2.500" /></svg>
          </div>
          <div className="flex min-h-0 flex-1 border-x border-b border-[#a0a0a0] bg-white pl-[1px]">
            <div className="min-w-0 flex-1 overflow-hidden">
              {tree.map((n, i) => (
                <TreeRow key={i} n={n} />
              ))}
            </div>
            <div className="flex w-[16px] shrink-0 flex-col items-center bg-[#f0f0f0] py-[2px]">
              <ChevronUp size={13} color="#555" strokeWidth={2.500} className="mt-[4px]" />
              <div className="mt-[105px] h-[276px] w-full bg-[#cdcdcd]" />
              <ChevronDown size={13} color="#666" strokeWidth={2.500} className="mt-auto mb-[1px]" />
            </div>
          </div>
          <NavBtn t="单构件输入" cls="mt-[1px] shrink-0" />
          <NavBtn t="报表预览" cls="shrink-0" />
        </div>
        {/* right column */}
        <div className="ml-[7px] flex min-w-0 flex-1 flex-col">
          <div className="flex h-[26px] shrink-0">
            <Band cls="w-[790px] pl-[1px]">
              <Grip w="w-[9px]" />
              <Tools items={row2} />
            </Band>
          </div>
          <div className="mt-[1px] flex h-[26px] shrink-0">
            <Band cls="w-[640px] pl-[8px]">
              <Combo w="w-[56px]" t="首层" />
              <span className="w-[4px]" />
              <Combo w="w-[68px]" t="梁" />
              <span className="w-[4px]" />
              <Combo w="w-[69px]" t="梁" />
              <span className="w-[3px]" />
              <Combo w="w-[67px]" t="KL-1 ( 2 )" />
              <span className="w-[5px]" />
              <Combo w="w-[69px]" t="分层1" />
              <Tools items={row3a} />
            </Band>
            <Band cls="ml-[1px] w-[420px]">
              <Grip w="w-[9px]" />
              <Tools items={row3b} />
            </Band>
          </div>
          <div className="mt-[3px] flex h-[27px] shrink-0">
            <Band cls="w-[1125px] pl-[1px]">
              <Grip w="w-[9px]" />
              <Tools items={row4a} />
              <Combo w="w-[60px]" t="" />
              <span className="w-[4px]" />
              <Tools items={row4b} />
              <More w="w-[32px]" />
            </Band>
            <Band cls="ml-[6px] w-[33px]">
              <Grip w="w-[8px]" />
            </Band>
          </div>
          <div className="mt-[1px] h-[307px] shrink-0"><Canvas /></div>
          <div className="mt-[1px] flex h-[26px] shrink-0 pl-[1px]">
            <Band cls="w-[474px]">
              <Grip w="w-[11px]" />
              <Tools items={snapA} />
              <Grip w="w-[12px]" />
              <Tools items={snapB} />
            </Band>
          </div>
          {/* span table */}
          <div className="mt-[5px] flex min-h-0 flex-1">
            <div className="flex w-[12px] shrink-0 flex-col items-center">
              <XIcon size={10} color="#555" strokeWidth={3} className="mt-[2px]" />
              <div className="mt-[2px] w-[6px] flex-1 border-x-2 border-dotted border-[#bbb]" />
            </div>
            <div className="flex min-w-0 flex-1 flex-col border-l border-[#a0a0a0] bg-white">
              <div className="flex h-[26px] shrink-0 items-center bg-[#f8f8f8] pl-[5px]">
                <span className="flex w-[90px] shrink-0 items-center gap-[4px]">{icons.copysm}复制跨数据</span>
                <span className="flex w-[85px] shrink-0 items-center gap-[2px] text-[#9a9a9a]">{icons.pastesm}粘贴跨数据</span>
                <span className="w-[94px] shrink-0">输入当前列数据</span>
                <span className="w-[94px] shrink-0">删除当前列数据</span>
                <span className="w-[58px] shrink-0">页面设置</span>
                <span className="w-[70px] shrink-0">调换起始跨</span>
                <span className="shrink-0">悬臂钢筋代号</span>
              </div>
              <div className="relative min-h-0 flex-1 overflow-hidden border-t border-[#a0a0a0]">
                <div className="grid w-[1400px] grid-cols-[31px_40px_61px_63px_40px_41px_41px_41px_41px_62px_81px_81px_81px_81px_81px_80px_81px_81px_81px_81px] grid-rows-[18px_19px_20px_19px]">
                  <div className={`${hc} row-span-2`} />
                  <div className={`${hc} row-span-2`}>跨号</div>
                  <div className={`${hc} col-span-2`}><Sim t="标高(m)" /></div>
                  <div className={`${hc} col-span-7`}><Sim t="构件尺寸(mm)" /></div>
                  <div className={`${hc} row-span-2`}>上通长筋</div>
                  <div className={`${hc} col-span-3`}>上部钢筋</div>
                  <div className={`${hc} col-span-2`}>下部钢筋</div>
                  <div className={`${hc} col-span-3`}>侧面钢筋</div>
                  <div className={hc}>起点标高</div>
                  <div className={`${hc} !bg-[#fbd596] text-[#8a3000]`}>终点标高</div>
                  {sub.map((t) => (
                    <div key={t} className={hc}><Sim t={t} /></div>
                  ))}
                  {sub2.map((t) => (
                    <div key={t} className={hc}>{t}</div>
                  ))}
                  <BodyRow cells={row1Cells} n="1" on />
                  <BodyRow cells={row2Cells} n="2" />
                </div>
                <svg viewBox="0 0 76 36" width="76" height="36" className="absolute left-[47px] top-[50px]">
                  <ellipse cx="38" cy="18" rx="34" ry="14" fill="none" stroke="#f00000" strokeWidth="5" />
                </svg>
                <div className="ml-[50px] mt-[17px] font-['Liberation_Sans',sans-serif] text-[21px] leading-none font-bold text-[#f00000]">4.47+0.48=4.95</div>
              </div>
              <div className="flex h-[17px] shrink-0 items-center bg-[#f0f0f0]">
                <ChevronLeft size={12} strokeWidth={3} color="#555" className="mx-[3px]" />
                <div className="h-full w-[530px] bg-[#cdcdcd]" />
                <ChevronRight size={12} strokeWidth={3} color="#555" className="ml-auto mr-[5px]" />
              </div>
              <div className="h-[2px] shrink-0 bg-[#f0f0f0]" />
            </div>
          </div>
        </div>
      </div>
      {/* status bar */}
      <div className="flex h-[22px] shrink-0 items-center gap-[2px] bg-[#f0f0f0]">
        <Status w="w-[148px]" t="X=80776 Y=10443" />
        <Status w="w-[78px]" t="层高:4.5m" />
        <Status w="w-[98px]" t="底标高:-0.03m" />
        <Status w="w-[48px]" t="1(3)" />
        <Status w="w-[912px]" t={'按鼠标左键选择梁图元,按右键或ESC退出;可以通过回车键及shift+"→←↑"光标键在跨之间、上下输入框之间进行切换'} />
        <Status w="flex-1" t="76 FPS" />
      </div>
      {/* taskbar */}
      <div className="flex h-[40px] shrink-0 items-center bg-[#05090d] text-white">
        <div className="flex h-full w-[48px] shrink-0 items-center justify-center bg-black">
          <svg viewBox="0 0 16 16" width="21" height="21" fill="#fff"><path d="M0 2.500l6.500-1v6H0zM7.500 1.300L16 0v7.500H7.500zM0 8.500h6.500v6l-6.500-1zM7.500 8.500H16V16l-8.500-1.300z" /></svg>
        </div>
        <div className="flex h-full w-[344px] shrink-0 items-center bg-[#333] pl-[9px] text-[13px] text-[#8d8d8d]">
          <span className="h-[21px] w-[21px] shrink-0 rounded-full border-[3px] border-[#e8e8e8]" />
          <span className="ml-[6px]">在这里输入你要搜索的内容</span>
          <Mic size={16} color="#777" className="ml-auto mr-[13px]" />
        </div>
        <span className="w-[2px]" />
        <TaskCell>
          <svg viewBox="0 0 24 24" width="24" height="24" fill="#eee"><path d="M12 12C8 14 3 12 3 7s6-5 8-1zM12 12c2-4 7-4 9-1s-1 8-5 7-5-3-4-6zM12 12c2 4-1 9-5 9s-5-5-3-8 6-2 8-1zM12 12c-2-3 0-9 4-9s5 4 4 7-5 3-8 2z" /></svg>
        </TaskCell>
        <TaskCell>
          <svg viewBox="0 0 24 24" width="24" height="24" fill="none" stroke="#bbb" strokeWidth="1.500"><path d="M20 8a9 9 0 1 0 1 6c-1 4-7 6-10 3s-2-9 3-9 5 5 2 6-4-2-2-3" /></svg>
        </TaskCell>
        <span className="h-[24px] w-[24px] shrink-0 border-l border-[#333] ml-[11px] -mr-[11px]" />
        <TaskCell>
          <svg viewBox="0 0 24 24" width="24" height="24" fill="none"><path d="M4 13h15c0-6-3-10-8-10S3 7 3 13s4 9 9 9c3 0 5-1 6-2v-4c-4 3-10 2-11-3zM8 10c0-5 7-5 7 0z" fill="#0a78d8" fillRule="evenodd" /></svg>
        </TaskCell>
        <TaskCell>
          <svg viewBox="0 0 20 24" width="20" height="24"><path d="M1 6h18v17H1z" fill="#fff" /><path d="M6 7V3c0-3 8-3 8 0v4" stroke="#fff" strokeWidth="1.500" fill="none" /><path d="M6 10h3v3H6zM10 10h4v3h-4zM6 14h3v3H6zM10 14h4v3h-4z" fill="#111" /></svg>
        </TaskCell>
        <TaskCell>
          <svg viewBox="0 0 22 22" width="22" height="22"><path d="M0 2h8l2 2h12v17H0z" fill="#f3cf63" /><path d="M0 7h22v14H0z" fill="#fbe48f" /><path d="M7 11h8v8H7z" fill="#3aa0d8" /></svg>
        </TaskCell>
        <TaskCell on>
          <span className="text-[27px] leading-none font-bold text-[#1f8ce0] font-['Liberation_Sans',sans-serif]">G</span>
        </TaskCell>
        <TaskCell on active><AppLogo size={24} /></TaskCell>
        <TaskCell on>
          <svg viewBox="0 0 24 24" width="24" height="24"><circle cx="12" cy="12" r="10" fill="#6ec43c" stroke="#cfe" /><path d="M6 10l6-5 6 5M6 14l6 5 6-5" stroke="#fff" strokeWidth="2" fill="none" /></svg>
        </TaskCell>
        <TaskCell on>
          <svg viewBox="0 0 24 24" width="24" height="24"><rect width="24" height="24" rx="2" fill="#f0a020" /><rect x="4" y="4" width="15" height="17" fill="#fbe6b0" /><path d="M7 9h9M7 12h9M7 15h6" stroke="#b07020" /><path d="M13 15L22 2" stroke="#c03010" strokeWidth="2" /></svg>
        </TaskCell>
        <TaskCell on>
          <span className="flex items-end"><span className="h-[15px] w-[9px] bg-[#ddd]" /><span className="-ml-[1px] mb-[6px] text-[19px] leading-none font-bold text-[#f0e020] font-['Liberation_Sans',sans-serif]">?</span></span>
        </TaskCell>
        <div className="ml-[111px] flex w-[56px] shrink-0 flex-col items-center text-[13px] leading-[18px]">
          <span>31%</span>
          <span>CPU使用</span>
        </div>
        <ChevronUp size={16} strokeWidth={1.500} className="ml-[14px] shrink-0" />
        <svg viewBox="0 0 18 12" width="16" height="11" className="ml-[8px] shrink-0"><rect x=".7" y="1" width="15" height="10" fill="none" stroke="#fff" strokeWidth="1.200" /><rect x="3" y="3" width="7" height="6" fill="#fff" /><rect x="16" y="4" width="2" height="4" fill="#fff" /></svg>
        <Wifi size={16} color="#ccc" className="ml-[9px] shrink-0" />
        <Volume2 size={16} color="#ddd" strokeWidth={1.500} className="ml-[6px] shrink-0" />
        <span className="ml-[9px] w-[16px] shrink-0 text-[15px]">中</span>
        <span className="ml-[13px] flex h-[16px] w-[16px] shrink-0 items-center justify-center rounded-[3px] bg-[#e8501a] text-[13px] font-bold font-['Liberation_Sans',sans-serif]">S</span>
        <div className="ml-[11px] flex w-[72px] shrink-0 flex-col items-center text-[13px] leading-[18px]">
          <span>18:35</span>
          <span>2017/7/25</span>
        </div>
        <div className="relative ml-[25px] flex h-[22px] w-[18px] shrink-0 flex-col gap-[2px] bg-white p-[3px]">
          <span className="h-[2px] bg-[#222]" />
          <span className="h-[2px] bg-[#222]" />
          <span className="h-[2px] w-[7px] bg-[#222]" />
          <span className="absolute -right-[7px] -bottom-[6px] flex h-[17px] w-[17px] items-center justify-center rounded-full bg-[#444] text-[12px] font-bold">2</span>
        </div>
      </div>
      {/* floats */}
      <div className="absolute left-[1083px] -top-[26px] flex h-[44px] w-[44px] items-end justify-center rounded-full border-2 border-[#dce8dc] bg-[#3cb44a] pb-[3px] text-[12px] font-bold text-white shadow-[0_2px_5px_rgba(0,0,0,.5)]">67</div>
      <div className="absolute left-[427px] top-[689px] flex h-[22px] w-[185px] items-center gap-[7px] border border-[#cfd8e4] bg-white pr-[3px] text-[#1480d8]">
        <span className="flex h-[22px] w-[25px] shrink-0 -rotate-6 items-center justify-center rounded-[3px] bg-[#f0501a] text-[18px] leading-none font-bold text-white font-['Liberation_Sans',sans-serif]">S</span>
        <span className="text-[15px] leading-none font-bold">中</span>
        <span className="text-[13px] leading-none font-bold">°,</span>
        <Mic size={15} strokeWidth={2.500} />
        <Keyboard size={16} strokeWidth={2.200} />
        <User size={15} color="#aab" fill="#cfd6e0" />
        <Shirt size={15} fill="#1480d8" />
        <Wrench size={15} fill="#1480d8" />
      </div>
    </div>
  );
}
